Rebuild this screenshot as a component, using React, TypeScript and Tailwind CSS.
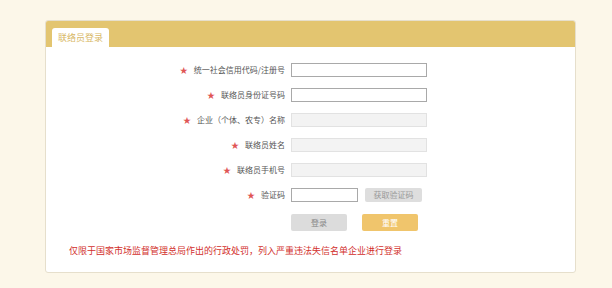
import React from 'react';

const rows = [
  { label: '统一社会信用代码/注册号', disabled: false },
  { label: '联络员身份证号码', disabled: false },
  { label: '企业（个体、农专）名称', disabled: true },
  { label: '联络员姓名', disabled: true },
  { label: '联络员手机号', disabled: true },
];

function Label({ text }: { text: string }) {
  return (
    <div className="w-[239px] flex items-center justify-end text-[8px] text-[#555]">
      <span className="text-[#e05555] text-[8px] mr-[6px]">★</span>
      <span>{text}</span>
    </div>
  );
}

export default function App() {
  return (
    <div
      className="w-[612px] h-[288px] bg-[#fcf7e9] pt-[20px] pl-[45px]"
      style={{ fontFamily: '"Noto Sans CJK SC", "Noto Sans", sans-serif' }}
    >
      <div className="w-[531px] h-[253px] bg-white border border-[#e6dfcc] rounded-[3px] overflow-hidden">
        {/* 标题栏 */}
        <div className="h-[26px] bg-[#e3c570] flex items-end pl-[6px]">
          <div className="w-[57px] h-[19px] bg-white rounded-t-[3px] flex items-center justify-center text-[9px] text-[#d8b764]">
            联络员登录
          </div>
        </div>

        <div className="pt-[16px] flex flex-col gap-[11px]">
          {rows.map((r) => (
            <div key={r.label} className="flex items-center">
              <Label text={r.label} />
              <input
                disabled={r.disabled}
                className={
                  'ml-[6px] w-[136px] h-[14px] border outline-none ' +
                  (r.disabled ? 'bg-[#f3f3f3] border-[#e2e2e2]' : 'bg-white border-[#a9a9a9]')
                }
              />
            </div>
          ))}
          <div className="flex items-center">
            <Label text="验证码" />
            <input className="ml-[6px] w-[67px] h-[14px] border border-[#a9a9a9] bg-white outline-none" />
            <button className="ml-[7px] w-[57px] h-[14px] bg-[#dedede] rounded-[2px] text-[8px] text-[#999] flex items-center justify-center">
              获取验证码
            </button>
          </div>
        </div>

        <div className="flex pl-[245px] mt-[12px] gap-[15px]">
          <button className="w-[56px] h-[17px] bg-[#dcdcdc] rounded-[2px] text-[8px] text-[#888] flex items-center justify-center">
            登录
          </button>
          <button className="w-[56px] h-[17px] bg-[#f0c56c] rounded-[2px] text-[8px] text-white flex items-center justify-center">
            重置
          </button>
        </div>

        <div className="mt-[14px] pl-[23px] text-[9px] text-[#d2302c] leading-[12px]">
          仅限于国家市场监督管理总局作出的行政处罚，列入严重违法失信名单企业进行登录
        </div>
      </div>
    </div>
  );
}
